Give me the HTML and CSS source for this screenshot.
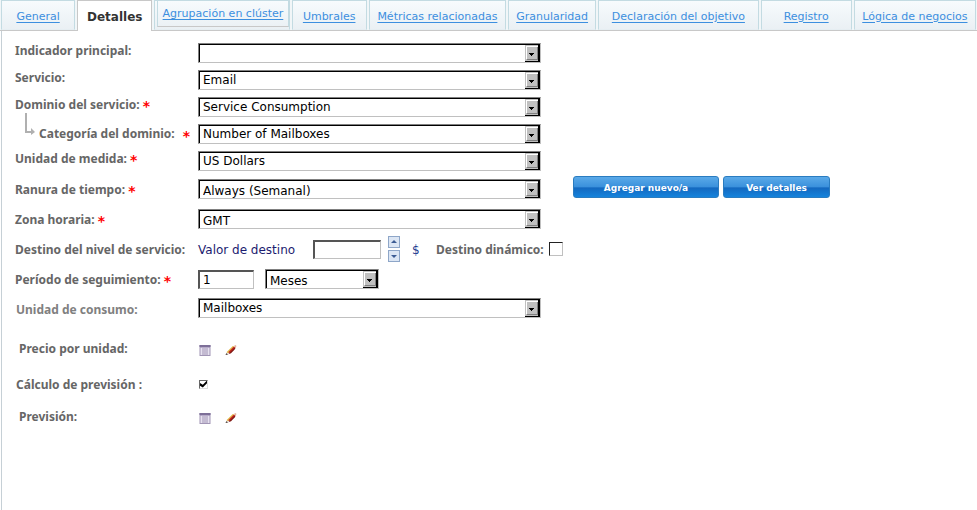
FILE: index.html
```html
<!DOCTYPE html>
<html lang="es">
<head>
    <meta charset="UTF-8">
    <meta name="viewport" content="width=device-width, initial-scale=1.0">
    <title>Detalles</title>
    <link rel="stylesheet" href="styles.css">
</head>
<body>
    <!-- Shared icons -->
    <svg class="sprite" aria-hidden="true">
        <symbol id="drop" viewBox="0 0 15 17">
            <path fill="#c0c0c0" d="M0 0h15v17H0z"/>
            <path fill="#fff" d="M1 1h12v1H2v12H1z"/>
            <path fill="#808080" d="M12 2h1v13H2v-1h10z"/>
            <path fill="#000" d="M13 0h2v17H0v-1h13zM4 8h5v1H8v1H7v1H6v-1H5V9H4z"/>
        </symbol>
        <symbol id="table" viewBox="0 0 11 11">
            <path fill="#a195b5" d="M0 0h11v11H0z"/>
            <path fill="#7d6f98" d="M0 0h11v2H0z"/>
            <path fill="#b7abc9" d="M1 2h9v1H1z"/>
            <path fill="#e6e1ef" d="M1 3h2v7H1zM4 3h1v7H4zM6 3h1v7H6zM8 3h2v7H8z"/>
        </symbol>
        <symbol id="pencil" viewBox="0 0 12 12">
            <path fill="#e0b848" d="M1 8l7-7 2 1-7 7z"/>
            <path fill="#c2201c" d="M3 8l6-6 2 1-6 6z"/>
            <path fill="#7c1712" d="M4 9l6-6h1l-1 2-4 4-3 1z"/>
            <path fill="#e7b3a0" d="M9 1l2-1 1 1-1 2z"/>
            <path fill="#2b1a12" d="M0 11l1-2 2 1z"/>
        </symbol>
    </svg>

    <nav class="tabs">
        <a class="tab" href="#general">General</a>
        <a class="tab active" href="#detalles">Detalles</a>
        <a class="tab boxed" href="#cluster"><span>Agrupación en clúster</span></a>
        <a class="tab" href="#umbrales">Umbrales</a>
        <a class="tab" href="#metricas">Métricas relacionadas</a>
        <a class="tab" href="#granularidad">Granularidad</a>
        <a class="tab" href="#objetivo">Declaración del objetivo</a>
        <a class="tab" href="#registro">Registro</a>
        <a class="tab" href="#logica">Lógica de negocios</a>
    </nav>

    <form class="panel" id="detalles">
        <div class="row">
            <label for="indicador">Indicador principal:</label>
            <div class="select"><select id="indicador"><option></option></select><svg><use href="#drop"/></svg></div>
        </div>
        <div class="row">
            <label for="servicio">Servicio:</label>
            <div class="select"><select id="servicio"><option>Email</option></select><svg><use href="#drop"/></svg></div>
        </div>
        <div class="row">
            <label for="dominio">Dominio del servicio: <b>*</b></label>
            <div class="select"><select id="dominio"><option>Service Consumption</option></select><svg><use href="#drop"/></svg></div>
        </div>
        <div class="row">
            <label class="child" for="categoria">
                <svg class="branch" viewBox="0 0 11 22"><path fill="#b0b0b0" d="M1 0h2v18h4v-3l4 4-4 3v-2H1z"/></svg>
                Categoría del dominio: <b>*</b>
            </label>
            <div class="select"><select id="categoria"><option>Number of Mailboxes</option></select><svg><use href="#drop"/></svg></div>
        </div>
        <div class="row">
            <label for="unidad">Unidad de medida: <b>*</b></label>
            <div class="select"><select id="unidad"><option>US Dollars</option></select><svg><use href="#drop"/></svg></div>
        </div>
        <div class="row tall">
            <label for="ranura">Ranura de tiempo: <b>*</b></label>
            <div class="select"><select id="ranura"><option>Always (Semanal)</option></select><svg><use href="#drop"/></svg></div>
            <div class="actions">
                <button type="button" class="btn wide">Agregar nuevo/a</button>
                <button type="button" class="btn">Ver detalles</button>
            </div>
        </div>
        <div class="row tall">
            <label for="zona">Zona horaria: <b>*</b></label>
            <div class="select"><select id="zona"><option>GMT</option></select><svg><use href="#drop"/></svg></div>
        </div>
        <div class="row tall">
            <span class="label">Destino del nivel de servicio:</span>
            <div class="fields">
                <label class="target" for="destino">Valor de destino</label>
                <input class="text value" id="destino" type="text">
                <span class="spin">
                    <button type="button" aria-label="Aumentar"><svg viewBox="0 0 10 10"><path d="M2 6h6L5 3z"/></svg></button>
                    <button type="button" aria-label="Reducir"><svg viewBox="0 0 10 10"><path d="M2 4h6L5 7z"/></svg></button>
                </span>
                <span class="currency">$</span>
                <label for="dinamico">Destino dinámico:</label>
                <input class="check" id="dinamico" type="checkbox">
            </div>
        </div>
        <div class="row tall">
            <label for="periodo">Período de seguimiento: <b>*</b></label>
            <div class="fields">
                <input class="text period" id="periodo" type="text" value="1">
                <div class="select months"><select aria-label="Unidad del período"><option>Meses</option></select><svg><use href="#drop"/></svg></div>
            </div>
        </div>
        <div class="row last">
            <label class="muted" for="consumo">Unidad de consumo:</label>
            <div class="select"><select id="consumo"><option>Mailboxes</option></select><svg><use href="#drop"/></svg></div>
        </div>

        <div class="extra">
            <div class="row">
                <span class="label">Precio por unidad:</span>
                <div class="icons">
                    <button type="button" aria-label="Ver tabla"><svg><use href="#table"/></svg></button>
                    <button type="button" aria-label="Editar"><svg><use href="#pencil"/></svg></button>
                </div>
            </div>
            <div class="row">
                <label for="calculo">Cálculo de previsión :</label>
                <input class="check small" id="calculo" type="checkbox" checked>
            </div>
            <div class="row">
                <span class="label">Previsión:</span>
                <div class="icons">
                    <button type="button" aria-label="Ver tabla"><svg><use href="#table"/></svg></button>
                    <button type="button" aria-label="Editar"><svg><use href="#pencil"/></svg></button>
                </div>
            </div>
        </div>
    </form>
</body>
</html>
```

FILE: styles.css
```css
* {
    box-sizing: border-box;
}

body {
    margin: 0;
    min-height: 100vh;
    display: flex;
    flex-direction: column;
    background-color: #fff;
    font-family: "DejaVu Sans", Verdana, sans-serif;
    font-size: 12px;
    color: #000;
}

.sprite {
    display: none;
}

/* Tabs */
.tabs {
    display: grid;
    grid-template-columns:
        minmax(0, 74fr) minmax(0, 75fr) minmax(0, 135fr)
        minmax(0, 75fr) minmax(0, 137fr) minmax(0, 88fr)
        minmax(0, 160fr) minmax(0, 91fr) minmax(0, 122fr);
    grid-template-rows: 30px;
    gap: 2px;
    padding: 0 1px;
    background-color: #f1f6f8;
    border-bottom: 1px solid #c8c8c8;
}

.tab {
    display: flex;
    align-items: center;
    justify-content: center;
    padding-top: 2px;
    border: 1px solid #c3dbe2;
    border-bottom-color: #e6eef2;
    background: linear-gradient(#f7fbfd, #eaf0f4);
    color: #3c8fdf;
    font-size: 11px;
    white-space: nowrap;
    text-decoration: underline;
    text-underline-offset: 2px;
}

.tab.active {
    height: 31px;
    border-color: #c8c8c8;
    border-bottom: 0;
    background: #fff;
    color: #333;
    font-size: 12px;
    font-weight: bold;
    text-decoration: none;
}

.tab.boxed {
    align-items: stretch;
    justify-content: stretch;
    padding: 0 0 2px 2px;
}

.tab.boxed span {
    flex: 1;
    border: 1px solid #c3dbe2;
    border-top: 0;
    border-bottom-color: #c8c8c8;
    line-height: 25px;
    text-align: center;
}

/* Form */
.panel {
    flex: 1;
    margin-left: 1px;
    padding: 8px 0 0 13px;
    border-left: 1px solid #c6d0d6;
}

.row {
    display: grid;
    grid-template-columns: 183px minmax(0, 343px) 1fr;
    align-items: center;
    height: 27px;
}

.row.tall {
    height: 30px;
}

label,
.label {
    color: #666;
    font-family: "Noto Sans", Tahoma, sans-serif;
    font-size: 12px;
    font-weight: bold;
    white-space: nowrap;
}

.row > label {
    padding-bottom: 5px;
}

.row.tall > label {
    padding-bottom: 0;
}

label b {
    color: #f00;
    font: bold 14px/12px "DejaVu Sans", Verdana, sans-serif;
    vertical-align: -2px;
}

.row > .child {
    display: flex;
    align-items: center;
    gap: 4px;
    padding: 0 0 0 9px;
}

.child b {
    margin: 4px 0 0 4px;
}

.branch {
    width: 11px;
    height: 22px;
    margin-top: -20px;
}

.row > .muted {
    padding: 4px 0 0 1px;
    color: #808080;
}

.select {
    position: relative;
    height: 20px;
}

.select select {
    display: block;
    width: 100%;
    height: 20px;
    padding: 1px 18px 0 4px;
    appearance: none;
    border: 1px solid #c0c0c0;
    border-top-color: #808080;
    border-left-color: #808080;
    border-radius: 0;
    box-shadow: inset 1px 1px 0 #000;
    background-color: #fff;
    color: #000;
    font: 12px "DejaVu Sans", Verdana, sans-serif;
}

.select svg {
    position: absolute;
    top: 2px;
    right: 1px;
    width: 15px;
    height: 17px;
    pointer-events: none;
}

.tall .select select {
    padding-top: 3px;
}

.last .select select {
    padding-top: 0;
}

.fields {
    grid-column: 2 / 4;
    display: flex;
    align-items: center;
}

.target {
    width: 115px;
    padding-top: 2px;
    color: #1c1c70;
    font-family: "DejaVu Sans", Verdana, sans-serif;
    font-weight: normal;
}

.text {
    height: 19px;
    padding: 0 3px;
    border: 1px solid #c0c0c0;
    border-top: 2px solid #555;
    border-left: 2px solid #555;
    font: 12px "DejaVu Sans", Verdana, sans-serif;
}

.value {
    width: 68px;
}

.period {
    width: 56px;
}

.months {
    width: 114px;
    margin-left: 11px;
}

.spin {
    display: grid;
    gap: 2px;
    margin: 0 12px 0 7px;
}

.spin button {
    width: 12px;
    height: 12px;
    padding: 0;
    border: 1px solid #8ea6c8;
    background-color: #dce6f4;
}

.spin svg {
    display: block;
    fill: #3d5c94;
}

.currency {
    width: 24px;
    padding-top: 2px;
    color: #1c3c90;
}

.check {
    appearance: none;
    width: 14px;
    height: 14px;
    margin: 0 0 0 5px;
    border: 1px solid #c0c0c0;
    border-top-color: #222;
    border-left-color: #222;
    background-color: #fff;
}

.check.small {
    width: 9px;
    height: 9px;
    margin-left: 1px;
    border-color: #666 #ddd #ddd #666;
}

.check:checked::before {
    content: "";
    display: block;
    height: 100%;
    background-color: #000;
    clip-path: polygon(0 35%, 40% 62%, 100% 0, 100% 40%, 40% 100%, 0 75%);
}

/* Buttons */
.actions {
    display: flex;
    gap: 4px;
    margin: -4px 0 0 32px;
}

.btn {
    width: 107px;
    height: 22px;
    padding: 2px 0 0;
    border: 1px solid #2a7cc0;
    border-radius: 3px;
    background: linear-gradient(#5aa9e8, #3a90dc 50%, #1468bf 54%, #1583dc);
    color: #fff;
    font: bold 9px "DejaVu Sans", Verdana, sans-serif;
}

.btn.wide {
    width: 146px;
}

/* Bottom rows */
.extra {
    margin-top: 12px;
}

.extra .row {
    height: 34px;
}

.extra .label {
    padding: 0 0 3px 4px;
}

.extra .row > label {
    padding: 0 0 0 1px;
}

.icons {
    display: flex;
    gap: 14px;
    padding-left: 1px;
}

.icons button {
    padding: 0;
    border: 0;
    background: none;
}

.icons svg {
    display: block;
    width: 12px;
    height: 11px;
}
```
